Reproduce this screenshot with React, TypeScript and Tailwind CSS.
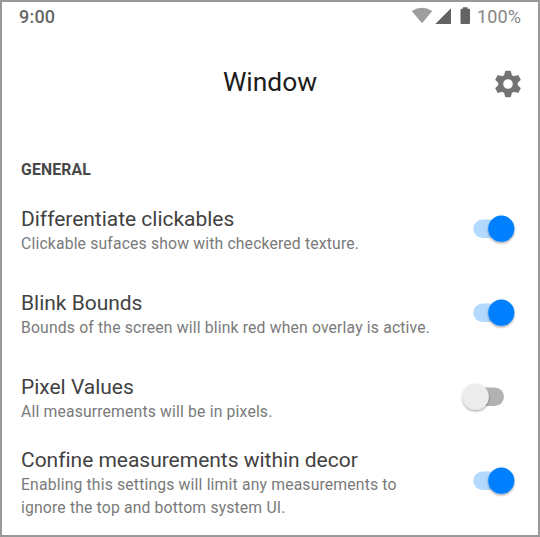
import React from "react";

function Toggle({ on }: { on: boolean }) {
  return (
    <svg className="h-[36px] w-[60px] shrink-0" viewBox="0 0 60 36">
      <defs>
        <filter id="thumb" x="-30%" y="-30%" width="160%" height="170%">
          <feDropShadow dx="0" dy="1.3" stdDeviation="1.1" floodColor="#000" floodOpacity="0.4" />
        </filter>
      </defs>
      <rect x={on ? 13.3 : 9} y="8.5" width="35" height="18.5" rx="9.25" fill={on ? "#b3d9ff" : "#b2b2b2"} />
      <circle cx={on ? 41.3 : 15.7} cy="17.7" r="13.1" fill={on ? "#0080ff" : "#ececec"} filter="url(#thumb)" />
    </svg>
  );
}

function Gear() {
  return (
    <svg className="mt-[5px] mr-[14px] h-[32px] w-[32px] justify-self-end" viewBox="-16 -16 32 32" fill="#737373">
      <circle r="7.3" fill="none" stroke="#737373" strokeWidth="5" />
      {[0, 60, 120, 180, 240, 300].map((a) => (
        <path key={a} d="M-4.4-7L-2.9-12.6Q-2.8-13.3-2.1-13.3H2.100Q2.800-13.3 2.900-12.6L4.400-7Z" transform={`rotate(${a})`} />
      ))}
    </svg>
  );
}

function Row({ title, lines, on }: { title: string; lines: string[]; on: boolean }) {
  return (
    <div className="flex h-[84px] items-center justify-between pr-[18px] pl-[19px]">
      <div className={lines.length > 1 ? "pt-[4px]" : "pt-[2px]"}>
        <div className="text-[21px] leading-[26px] tracking-[-0.02px] whitespace-nowrap text-[#424242]">{title}</div>
        {lines.map((l) => (
          <div key={l} className="text-[15.75px] leading-[23px] tracking-[0.155px] whitespace-nowrap text-[#7a7a7a]">{l}</div>
        ))}
      </div>
      <Toggle on={on} />
    </div>
  );
}

export default function App() {
  return (
    <div className="flex h-[537px] w-[540px] flex-col overflow-hidden border-2 border-[#999] bg-white font-['Roboto',sans-serif]">
      <div className="flex h-[28px] items-center justify-between pr-[17px] pl-[17px] text-[18px] text-[#858585]">
        <span className="font-medium tracking-[0.2px] text-[#666]">9:00</span>
        <div className="flex items-center">
          <svg className="h-[18px] w-[66px]" viewBox="0 0 66 18">
            <path d="M0.7 4Q11-2.5 21.3 4L11 16.2Z" fill="#9e9e9e" />
            <path d="M24.3 17H40V1.3Z" fill="#636363" />
            <path d="M50.5 1.8h1.4V0.2h4.6v1.6H58Q59 1.8 59 2.8V16Q59 17 58 17H50.5Q49.5 17 49.5 16V2.8Q49.5 1.8 50.5 1.8Z" fill="#636363" />
          </svg>
          <span className="tracking-[0.1px]">100%</span>
        </div>
      </div>
      <div className="grid h-[102px] grid-cols-3 items-center">
        <span />
        <span className="pt-[4px] text-center text-[26.4px] text-[#1c1c1c]">Window</span>
        <Gear />
      </div>
      <div className="flex h-[55px] items-end pb-[5px] pl-[19px] text-[15.75px] leading-[24px] font-bold tracking-[0.15px] text-[#484848]">GENERAL</div>
      <Row title="Differentiate clickables" lines={["Clickable sufaces show with checkered texture."]} on />
      <Row title="Blink Bounds" lines={["Bounds of the screen will blink red when overlay is active."]} on />
      <Row title="Pixel Values" lines={["All measurrements will be in pixels."]} on={false} />
      <Row title="Confine measurements within decor" lines={["Enabling this settings will limit any measurements to", "ignore the top and bottom system UI."]} on />
    </div>
  );
}
